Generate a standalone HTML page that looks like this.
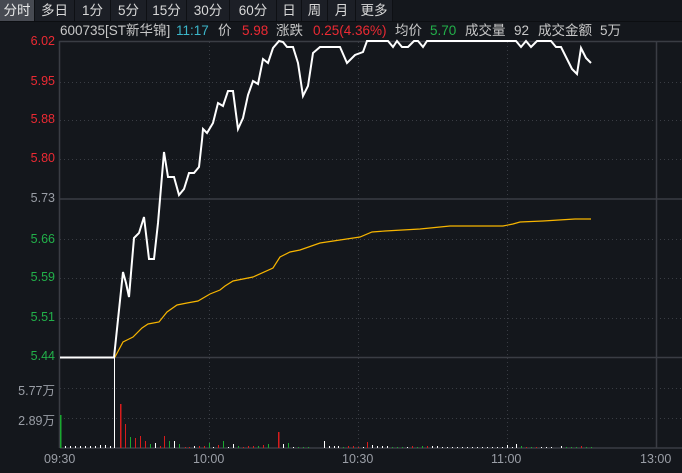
<!DOCTYPE html>
<html><head><meta charset="utf-8"><style>
html,body{margin:0;padding:0;background:#14171c;width:682px;height:473px;overflow:hidden;font-family:"Liberation Sans","Noto Sans CJK SC",sans-serif;}
.tabs{position:absolute;left:0;top:0;height:21px;width:393px;background:#1c1f26;}
.tab{position:absolute;top:0;height:21px;line-height:21px;font-size:13.5px;color:#d8d8d8;text-align:center;border-right:1px solid #0e1014;box-sizing:border-box;}
.sel{background:#474a52;color:#e8e8e8;}
.info{position:absolute;top:22px;font-size:13.5px;line-height:18px;white-space:nowrap;}
.g{color:#c8c8c8}.c{color:#3bb5c8}.r{color:#ec2a33}.gr{color:#22b04a}
.lab{position:absolute;font-size:12.5px;right:627px;text-align:right;white-space:nowrap;}
.t{position:absolute;top:452px;font-size:12.5px;color:#9a9ea6;}
</style></head><body>
<div class="tabs">
<div class="tab sel" style="left:0;width:35px">分时</div>
<div class="tab" style="left:35px;width:40px">多日</div>
<div class="tab" style="left:75px;width:36px">1分</div>
<div class="tab" style="left:111px;width:36px">5分</div>
<div class="tab" style="left:147px;width:40px">15分</div>
<div class="tab" style="left:187px;width:43px">30分</div>
<div class="tab" style="left:230px;width:47px">60分</div>
<div class="tab" style="left:277px;width:25px">日</div>
<div class="tab" style="left:302px;width:26px">周</div>
<div class="tab" style="left:328px;width:28px">月</div>
<div class="tab" style="left:356px;width:37px">更多</div>
</div>
<div style="position:absolute;left:0;top:21px;width:682px;height:1px;background:#0c0e11"></div>
<span class="info g" style="left:60px">600735[ST新华锦]</span>
<span class="info c" style="left:176px">11:17</span>
<span class="info g" style="left:218px">价</span>
<span class="info r" style="left:242px">5.98</span>
<span class="info g" style="left:276px">涨跌</span>
<span class="info r" style="left:313px">0.25(4.36%)</span>
<span class="info g" style="left:395px">均价</span>
<span class="info gr" style="left:430px">5.70</span>
<span class="info g" style="left:465px">成交量</span>
<span class="info g" style="left:514px">92</span>
<span class="info g" style="left:538px">成交金额</span>
<span class="info g" style="left:600px">5万</span>

<div class="lab r" style="top:34px">6.02</div>
<div class="lab r" style="top:74px">5.95</div>
<div class="lab r" style="top:112px">5.88</div>
<div class="lab r" style="top:151px">5.80</div>
<div class="lab" style="top:191px;color:#9a9ea6">5.73</div>
<div class="lab gr" style="top:232px">5.66</div>
<div class="lab gr" style="top:270px">5.59</div>
<div class="lab gr" style="top:310px">5.51</div>
<div class="lab gr" style="top:349px">5.44</div>
<div class="lab" style="top:380px;color:#9a9ea6">5.77万</div>
<div class="lab" style="top:410px;color:#9a9ea6">2.89万</div>
<div class="t" style="left:44px">09:30</div>
<div class="t" style="left:193px">10:00</div>
<div class="t" style="left:342px">10:30</div>
<div class="t" style="left:491px">11:00</div>
<div class="t" style="left:640px">13:00</div>

<svg width="682" height="473" style="position:absolute;left:0;top:0" xmlns="http://www.w3.org/2000/svg">
<g stroke="#3a3d44" stroke-width="1" stroke-dasharray="1,3" fill="none">
<line x1="60" y1="82.5" x2="682" y2="82.5"/><line x1="60" y1="120.5" x2="682" y2="120.5"/>
<line x1="60" y1="159.5" x2="682" y2="159.5"/><line x1="60" y1="239.5" x2="682" y2="239.5"/>
<line x1="60" y1="278.5" x2="682" y2="278.5"/><line x1="60" y1="318.5" x2="682" y2="318.5"/>
<line x1="60" y1="388.5" x2="682" y2="388.5"/><line x1="60" y1="418.5" x2="682" y2="418.5"/>
<line x1="209.5" y1="42" x2="209.5" y2="448"/><line x1="358.5" y1="42" x2="358.5" y2="448"/><line x1="507.5" y1="42" x2="507.5" y2="448"/>
</g>
<g stroke="#3a3d44" stroke-width="1.5" fill="none">
<line x1="59.5" y1="41.5" x2="682" y2="41.5"/>
<line x1="59.5" y1="41" x2="59.5" y2="448"/>
<line x1="60" y1="199" x2="682" y2="199"/>
<line x1="60" y1="357.5" x2="682" y2="357.5"/>
<line x1="60" y1="448" x2="682" y2="448"/>
<line x1="656.5" y1="41" x2="656.5" y2="448"/>
</g>
<polyline fill="none" stroke="#f7b500" stroke-width="1.2" points="114,358 115,357 123,342 133,337 142,328 148,324 159,322 167,312 177,305 187,303 198,301 210,294 220,290 225,286 233,281 253,277 273,268 280,257 290,252 300,250 320,243 340,240 360,237 372,232 385,231 420,229 450,226 503,226 513,224 520,222 543,221 575,219 591,219"/>
<polyline fill="none" stroke="#ffffff" stroke-width="2" stroke-linejoin="miter" points="60,357.5 114,357.5 123,272 126,283 129,297 131,273 134,238 139,233 144,217 149,259 154,259 158,223 164,152 168,177 174,177 179,195 184,189 189,173 194,173 199,167 202,140 203,129 207,133 213,123 218,103 223,106 228,91 233,91 238,129 243,118 248,95 253,81 258,84 263,59 268,63 273,48 279,41 283,42 287,47 293,47 298,63 303,96 308,86 313,53 320,47 340,47 347,63 355,55 363,52 367,41 388,41 393,47 397,41 402,47 408,47 414,41 418,41 423,47 427,41 516,41 521,47 526,41 531,47 537,41 551,41 556,47 561,47 572,69 577,74 581,48 586,58 591,63"/>
<line x1="114.5" y1="358" x2="114.5" y2="448" stroke="#fff" stroke-width="1"/>
<g shape-rendering="crispEdges">
<rect x="60" y="415" width="1.3" height="33" fill="#1aa82f"/>
<g fill="#fff">
<rect x="65" y="446" width="1" height="2"/><rect x="70" y="446" width="1" height="2"/><rect x="75" y="446" width="1" height="2"/><rect x="80" y="446" width="1" height="2"/><rect x="85" y="446" width="1" height="2"/><rect x="90" y="446" width="1" height="2"/><rect x="95" y="446" width="1" height="2"/><rect x="100" y="445" width="1" height="3"/><rect x="105" y="445" width="1" height="3"/><rect x="110" y="446" width="1" height="2"/>
<rect x="155" y="443" width="1" height="5"/><rect x="174" y="441" width="1" height="7"/><rect x="194" y="446" width="1" height="2"/><rect x="213" y="447" width="1" height="1"/><rect x="228" y="447" width="1" height="1"/><rect x="233" y="444" width="1" height="4"/><rect x="283" y="444" width="1" height="4"/><rect x="293" y="447" width="1" height="1"/>
<rect x="324" y="441" width="1" height="7"/><rect x="329" y="446" width="1" height="2"/><rect x="334" y="446" width="1" height="2"/><rect x="338" y="446" width="1" height="2"/><rect x="363" y="447" width="1" height="1"/><rect x="372" y="445" width="1" height="3"/><rect x="377" y="446" width="1" height="2"/><rect x="382" y="446" width="1" height="2"/><rect x="387" y="446" width="1" height="2"/>
<rect x="407" y="447" width="1" height="1"/><rect x="432" y="446" width="1" height="2"/><rect x="437" y="446" width="1" height="2"/><rect x="442" y="447" width="1" height="1"/><rect x="447" y="447" width="1" height="1"/><rect x="452" y="447" width="1" height="1"/><rect x="457" y="447" width="1" height="1"/><rect x="462" y="447" width="1" height="1"/><rect x="467" y="447" width="1" height="1"/><rect x="472" y="447" width="1" height="1"/><rect x="477" y="447" width="1" height="1"/><rect x="482" y="447" width="1" height="1"/><rect x="487" y="447" width="1" height="1"/><rect x="492" y="447" width="1" height="1"/><rect x="497" y="447" width="1" height="1"/><rect x="502" y="447" width="1" height="1"/>
<rect x="507" y="445" width="1" height="3"/><rect x="512" y="447" width="1" height="1"/><rect x="516" y="444" width="1" height="4"/><rect x="541" y="447" width="1" height="1"/><rect x="546" y="447" width="1" height="1"/><rect x="551" y="447" width="1" height="1"/><rect x="561" y="446" width="1" height="2"/>
</g>
<g fill="#d81c1c">
<rect x="120" y="404" width="1.3" height="44"/><rect x="125" y="424" width="1" height="24"/><rect x="135" y="438" width="1" height="10"/><rect x="140" y="436" width="1" height="12"/><rect x="145" y="441" width="1" height="7"/><rect x="160" y="446" width="1" height="2"/><rect x="164" y="436" width="1" height="12"/>
<rect x="185" y="447" width="1" height="1"/><rect x="189" y="447" width="1" height="1"/><rect x="199" y="446" width="1" height="2"/><rect x="204" y="446" width="1" height="2"/><rect x="218" y="445" width="1" height="3"/><rect x="243" y="447" width="1" height="1"/><rect x="248" y="446" width="1" height="2"/><rect x="253" y="446" width="1" height="2"/><rect x="263" y="445" width="1" height="3"/><rect x="278" y="432" width="1.3" height="16"/>
<rect x="348" y="446" width="1" height="2"/><rect x="353" y="446" width="1" height="2"/><rect x="358" y="447" width="1" height="1"/><rect x="367" y="442" width="1" height="6"/><rect x="412" y="446" width="1" height="2"/><rect x="427" y="446" width="1" height="2"/><rect x="526" y="447" width="1" height="1"/><rect x="536" y="447" width="1" height="1"/><rect x="581" y="446" width="1" height="2"/>
</g>
<g fill="#1aa82f">
<rect x="130" y="437" width="1" height="11"/><rect x="150" y="444" width="1" height="4"/><rect x="169" y="441" width="1" height="7"/><rect x="179" y="444" width="1" height="4"/><rect x="209" y="443" width="1" height="5"/><rect x="223" y="441" width="1" height="7"/><rect x="238" y="446" width="1" height="2"/><rect x="258" y="446" width="1" height="2"/><rect x="268" y="444" width="1" height="4"/><rect x="288" y="443" width="1" height="5"/><rect x="298" y="447" width="1" height="1"/><rect x="303" y="447" width="1" height="1"/><rect x="308" y="447" width="1" height="1"/><rect x="343" y="447" width="1" height="1"/>
<rect x="392" y="447" width="1" height="1"/><rect x="397" y="447" width="1" height="1"/><rect x="402" y="447" width="1" height="1"/><rect x="417" y="447" width="1" height="1"/><rect x="422" y="446" width="1" height="2"/><rect x="521" y="446" width="1" height="2"/><rect x="531" y="447" width="1" height="1"/><rect x="566" y="447" width="1" height="1"/><rect x="571" y="447" width="1" height="1"/><rect x="576" y="447" width="1" height="1"/><rect x="586" y="447" width="1" height="1"/><rect x="591" y="447" width="1" height="1"/>
</g>
</g>
</svg>
</body></html>
